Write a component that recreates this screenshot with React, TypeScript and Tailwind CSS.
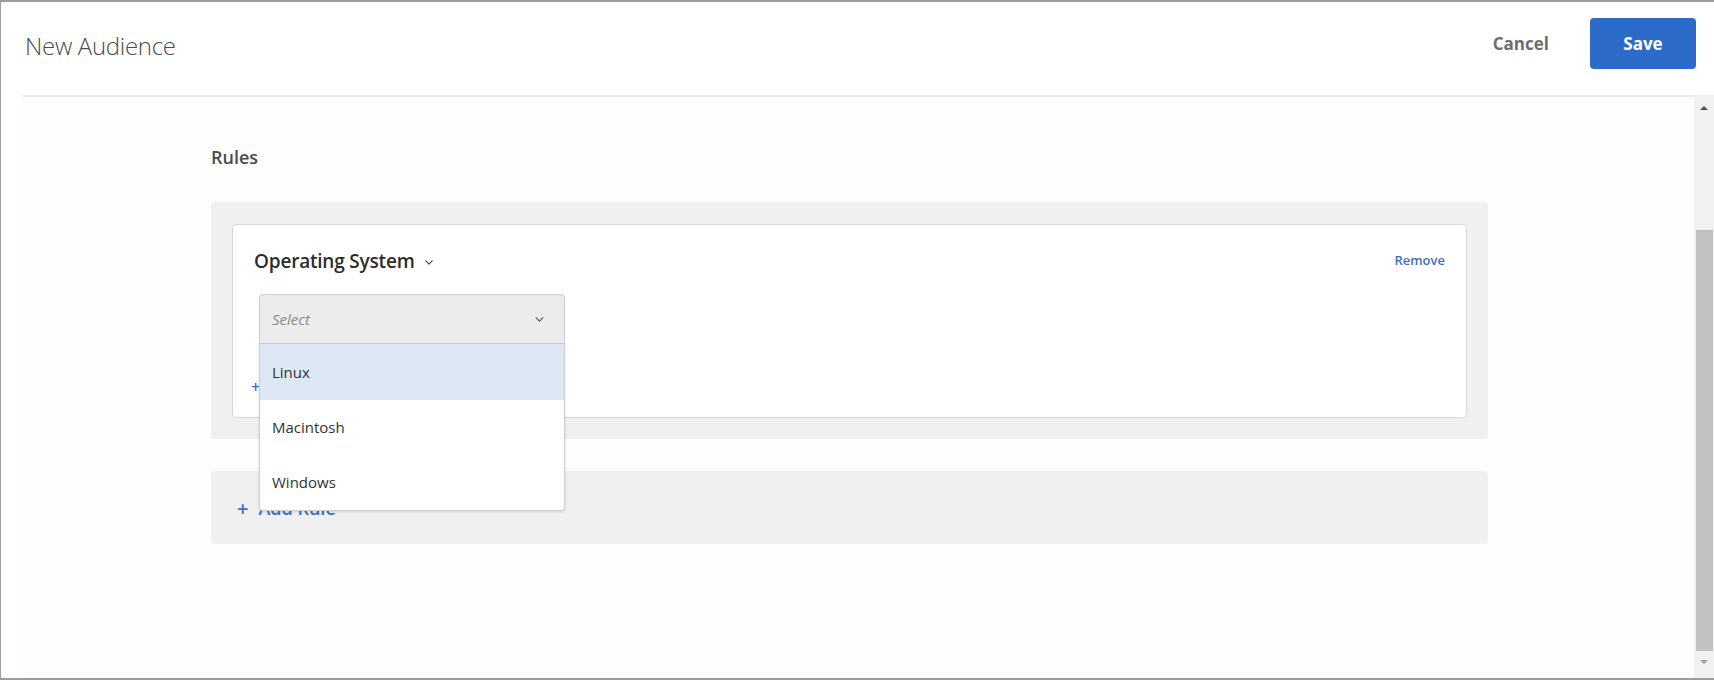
import React from "react";

function Chevron({ className }: { className?: string }) {
  return (
    <svg viewBox="0 0 10 6" className={className} fill="none">
      <path d="M1 1l4 4 4-4" stroke="currentColor" strokeWidth="1.6" strokeLinecap="round" strokeLinejoin="round" />
    </svg>
  );
}

const OPTIONS = ["Linux", "Macintosh", "Windows"];

function Scrollbar() {
  return (
    <div className="flex w-[20px] flex-col items-center bg-[#f1f1f1]">
      <div className="flex h-[26px] w-full items-center justify-center">
        <svg viewBox="0 0 8 4" className="h-[4px] w-[8px]">
          <path d="M0 4L4 0l4 4z" fill="#505050" />
        </svg>
      </div>
      <div className="h-[109px]" />
      <div className="h-[421px] w-[17px] bg-[#c1c1c1]" />
      <div className="flex h-[22px] w-full items-center justify-center">
        <svg viewBox="0 0 8 4" className="h-[4px] w-[8px]">
          <path d="M0 0h8L4 4z" fill="#a3a3a3" />
        </svg>
      </div>
    </div>
  );
}

export default function App() {
  return (
    <div className="flex h-[680px] w-[1714px] flex-col overflow-hidden border-b-2 border-l border-t-2 border-[#9d9d9d] bg-white font-['Open_Sans',sans-serif]">
      <header className="flex h-[93px] items-center justify-between pb-[10px] pl-[24px] pr-[18px]">
        <h1 className="mt-[5px] text-[24px] font-light tracking-[-0.3px] text-[#4b4b4b]">New Audience</h1>
        <div className="flex items-center gap-[41px]">
          <button className="text-[17px] font-bold text-[#6e6e6e]">Cancel</button>
          <button className="h-[51px] w-[106px] rounded-[4px] bg-[#2c6cc8] text-[17px] font-bold text-white">
            Save
          </button>
        </div>
      </header>
      <div className="flex flex-1">
        <div className="w-[22px]" />
        <main className="flex-1 border-t-2 border-[#ebebeb] bg-[#fdfdfd] pl-[188px] pr-[206px] pt-[48px]">
          <h2 className="text-[18px] font-semibold leading-[24px] text-[#4b4b4b]">Rules</h2>

          <div className="mt-[33px] rounded-[4px] bg-[#f0f0f0] px-[21px] pb-[21px] pt-[22px]">
            <div className="h-[194px] rounded-[4px] border border-[#d8d8d8] bg-white px-[21px] pt-[20px]">
              <div className="flex items-center justify-between">
                <div className="flex items-center gap-[10px]">
                  <span className="text-[19px] font-semibold leading-[32px] tracking-[-0.2px] text-[#2c2c2c]">
                    Operating System
                  </span>
                  <Chevron className="mt-[2px] h-[5px] w-[8px] text-[#4b4b4b]" />
                </div>
                <button className="text-[13px] font-semibold text-[#3f6ec0]">Remove</button>
              </div>

              <div className="ml-[5px] mt-[17px] w-[306px]">
                <div className="relative">
                  <div className="flex h-[50px] items-center justify-between rounded-t-[4px] border border-[#cfcfcf] bg-[#ececec] pl-[12px] pr-[20px]">
                    <span className="text-[15px] italic text-[#8a8a8a]">Select</span>
                    <Chevron className="h-[5px] w-[9px] text-[#6e6e6e]" />
                  </div>
                  <ul className="absolute left-0 top-full z-10 w-full rounded-b-[4px] border border-t-0 border-[#cfcfcf] bg-white shadow-[0_1px_3px_rgba(0,0,0,0.12)]">
                    {OPTIONS.map((o, i) => (
                      <li
                        key={o}
                        className={
                          i === 0
                            ? "flex h-[56px] items-center bg-[#dee8f5] pl-[12px] text-[15px] text-[#323232]"
                            : "flex h-[55px] items-center pl-[12px] text-[15px] text-[#323232]"
                        }
                      >
                        {o}
                      </li>
                    ))}
                  </ul>
                </div>
                <div className="mt-[31px] flex items-center gap-[6px] text-[#3b6fc4]">
                  <span className="-ml-[8px] text-[16px] font-semibold">+</span>
                  <span className="text-[15px] font-semibold">Add Condition</span>
                </div>
              </div>
            </div>
          </div>

          <div className="mt-[32px] flex h-[73px] items-center rounded-[4px] bg-[#f0f0f0] pl-[26px]">
            <div className="mt-[2px] flex items-center gap-[10px] text-[#3b6fc4]">
              <span className="text-[20px] font-semibold">+</span>
              <span className="text-[18px] font-semibold">Add Rule</span>
            </div>
          </div>
        </main>
        <Scrollbar />
      </div>
    </div>
  );
}
